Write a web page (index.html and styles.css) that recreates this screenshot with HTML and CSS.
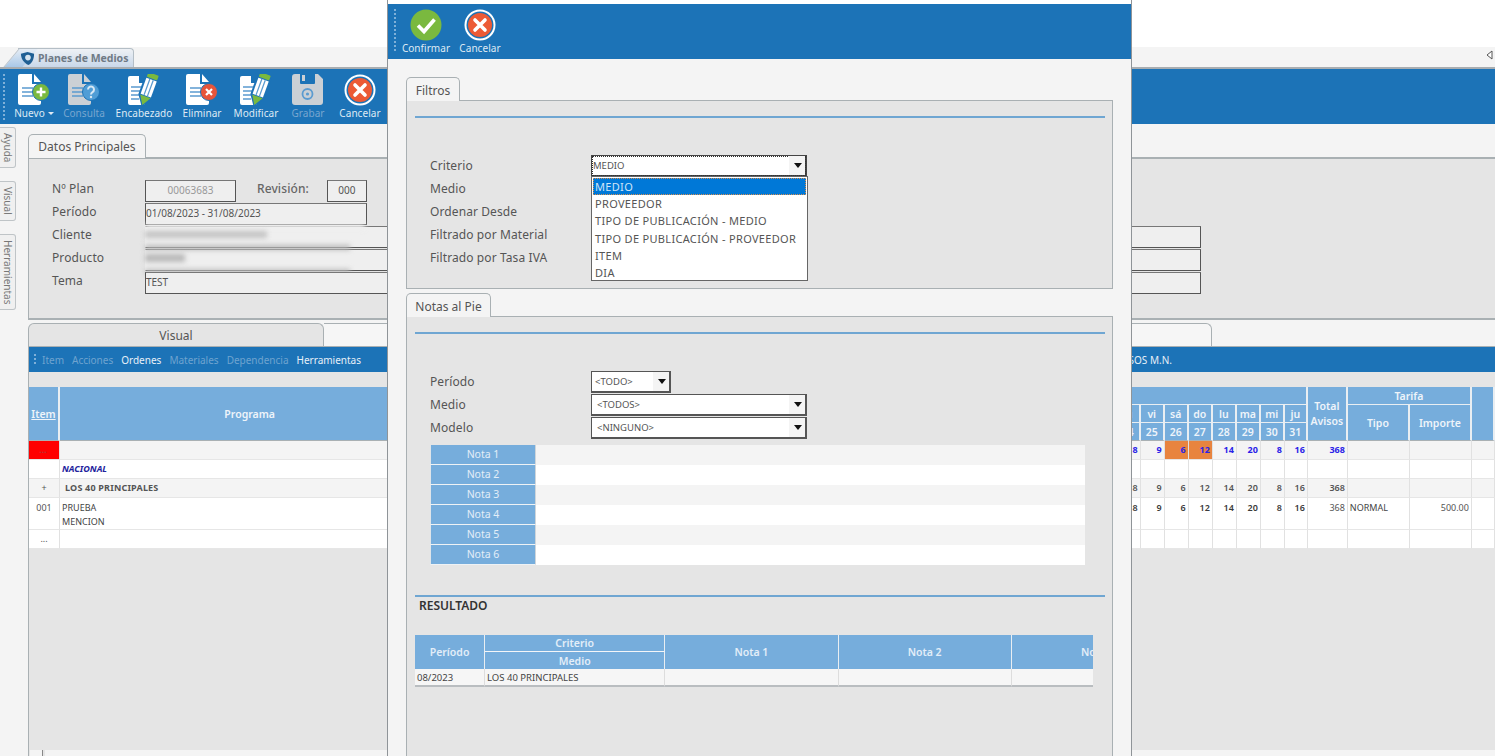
FILE: index.html
```html
<!DOCTYPE html>
<html lang="es">
<head>
<meta charset="utf-8">
<title>Planes de Medios</title>
<link rel="stylesheet" href="styles.css">
</head>
<body>
<svg class="defs" width="0" height="0" aria-hidden="true">
  <defs>
    <symbol id="doc" viewBox="0 0 32 32">
      <path d="M2 0H14V10H23V29a2 2 0 0 1-2 2H2a2 2 0 0 1-2-2V2a2 2 0 0 1 2-2z" fill="currentColor"/>
      <path d="M16 0l7 8h-7z" fill="currentColor"/>
      <path d="M4 14h11M4 18h11M4 22h11" stroke="#5b9bd0" stroke-width="1.4"/>
    </symbol>
    <symbol id="pencildoc" viewBox="0 0 32 32">
      <path d="M2 2H11V9H17V29a2 2 0 0 1-2 2H2a2 2 0 0 1-2-2V4a2 2 0 0 1 2-2z" fill="#fff"/>
      <path d="M3 13h10M3 17h10M3 21h10M3 25h8" stroke="#5b9bd0" stroke-width="1.4"/>
      <g transform="translate(20.5 14) rotate(20)">
        <path d="M-7.5 -12H7.500V9L0 20L-7.500 9z" fill="#1c73b7"/>
        <rect x="-5.500" y="-15" width="11" height="5" rx="1" fill="#7ab93f"/>
        <rect x="-5.500" y="-9" width="11" height="17" fill="#fff"/>
        <path d="M-1.800 -9V8M1.800 -9V8" stroke="#5b9bd0" stroke-width="1.300"/>
        <path d="M-5.500 9H5.500L0 18z" fill="#7ab93f"/>
      </g>
    </symbol>
    <symbol id="cancel" viewBox="0 0 32 32">
      <circle cx="16" cy="16" r="15.500" fill="#fff"/>
      <circle cx="16" cy="16" r="13.500" fill="#1c73b7"/>
      <circle cx="16" cy="16" r="12" fill="#ec5a35"/>
      <path d="M11 11l10 10M21 11l-10 10" stroke="#fff" stroke-width="3.600" stroke-linecap="round"/>
    </symbol>
  </defs>
</svg>

<div class="app">
  <div class="topgap"></div>
  <div class="tabstrip">
    <div class="apptab">
      <svg class="applogo" viewBox="0 0 16 16"><path d="M1 3L8 1l7 2c0 6-2 10-6 12C4 13 1 8 1 3z" fill="#1f5f94"/><circle cx="8.500" cy="7" r="3" fill="#d7e4ef"/></svg>
      <span>Planes de Medios</span>
    </div>
    <svg class="collapse" viewBox="0 0 7 10"><path d="M6 1v8L1 5z" fill="#fff" stroke="#555"/></svg>
  </div>

  <div class="ribbon">
    <div class="grip"></div>
    <div class="rbtn rbtn-nuevo">
      <svg class="ico"><use href="#doc" class="w"/><circle cx="23" cy="18" r="8.500" fill="#7ab93f" stroke="#1c73b7"/><path d="M23 13.500v9M18.500 18h9" stroke="#fff" stroke-width="2.400"/></svg>
      <span>Nuevo<i class="caret"></i></span>
    </div>
    <div class="rbtn off rbtn-consulta">
      <svg class="ico"><use href="#doc" class="g"/><circle cx="23" cy="18" r="8.500" fill="#4f9dd6" stroke="#1c73b7"/><path d="M20 15.500a3 3 0 1 1 4.500 2.600c-1 .6-1.500 1.200-1.500 2.400" fill="none" stroke="#d8e8f4" stroke-width="2"/><circle cx="23" cy="23" r="1.200" fill="#d8e8f4"/></svg>
      <span>Consulta</span>
    </div>
    <div class="rbtn rbtn-enc">
      <svg class="ico"><use href="#pencildoc"/></svg>
      <span>Encabezado</span>
    </div>
    <div class="rbtn rbtn-eli">
      <svg class="ico"><use href="#doc" class="w"/><circle cx="23" cy="18" r="8.500" fill="#e8553a" stroke="#1c73b7"/><path d="M20 15l6 6M26 15l-6 6" stroke="#fff" stroke-width="2.200"/></svg>
      <span>Eliminar</span>
    </div>
    <div class="rbtn rbtn-mod">
      <svg class="ico"><use href="#pencildoc"/></svg>
      <span>Modificar</span>
    </div>
    <div class="rbtn off rbtn-gra">
      <svg class="ico" viewBox="0 0 32 32"><path d="M3 0H7V10H23V0H26L31 5V28a3 3 0 0 1-3 3H3a3 3 0 0 1-3-3V3a3 3 0 0 1 3-3z" fill="#cbd0d5"/><path d="M7 0H23V10H7z" fill="#cbd0d5"/><path d="M8 0H23V9a1 1 0 0 1-1 1H9a1 1 0 0 1-1-1z" fill="#1c73b7"/><rect x="10" y="1" width="3" height="6" fill="#cbd0d5"/><circle cx="15.500" cy="20" r="5" fill="none" stroke="#5b9bd0" stroke-width="1.800"/><circle cx="15.500" cy="20" r="1.600" fill="#5b9bd0"/></svg>
      <span>Grabar</span>
    </div>
    <div class="rbtn rbtn-can">
      <svg class="ico"><use href="#cancel"/></svg>
      <span>Cancelar</span>
    </div>
  </div>

  <div class="main">
    <div class="sidebar">
      <div class="sidetab st1">Ayuda</div>
      <div class="sidetab st2">Visual</div>
      <div class="sidetab st3">Herramientas</div>
    </div>
    <div class="content">
      <div class="tab tab-datos">Datos Principales</div>
      <div class="panel panel-datos">
        <div class="frow"><label>Nº Plan</label><div class="inp w-plan c-gray">00063683</div><label class="rev">Revisión:</label><div class="inp w-rev">000</div></div>
        <div class="frow"><label>Período</label><div class="inp w-per">01/08/2023 - 31/08/2023</div></div>
        <div class="frow"><label>Cliente</label><div class="inp w-full noleft"><div class="blur b0"></div><div class="blur b1"></div></div></div>
        <div class="frow"><label>Producto</label><div class="inp w-full noleft"><div class="blur b2"></div><div class="blur b3"></div></div></div>
        <div class="frow"><label>Tema</label><div class="inp w-full">TEST</div></div>
      </div>

      <div class="tabs2">
        <div class="t2 t2-a">Visual</div>
        <div class="t2 t2-b"></div>
      </div>
      <div class="lower">
        <div class="subbar">
          <div class="grip grip-s"></div>
          <span class="dis">Item</span><span class="dis">Acciones</span><span>Ordenes</span><span class="dis">Materiales</span><span class="dis">Dependencia</span><span>Herramientas</span>
          <span class="sub-right">AVISOS M.N.</span>
        </div>
        <div class="strip"></div>
        <table class="grid">
          <colgroup>
            <col class="c-item"><col class="c-prog"><col class="c-mid">
            <col class="c-d"><col class="c-d"><col class="c-d"><col class="c-d"><col class="c-d"><col class="c-d"><col class="c-d"><col class="c-d7">
            <col class="c-tot"><col class="c-tar"><col class="c-tar"><col class="c-end">
          </colgroup>
          <thead>
            <tr class="h1">
              <th rowspan="3" class="lnk">Item</th><th rowspan="3">Programa</th><th rowspan="3"></th><th colspan="8"></th><th rowspan="3" class="tot">Total<br>Avisos</th><th colspan="2">Tarifa</th><th rowspan="3"></th>
            </tr>
            <tr class="h2"><th>ju</th><th>vi</th><th>sá</th><th>do</th><th>lu</th><th>ma</th><th>mi</th><th>ju</th><th rowspan="2">Tipo</th><th rowspan="2">Importe</th></tr>
            <tr class="h3"><th>24</th><th>25</th><th>26</th><th>27</th><th>28</th><th>29</th><th>30</th><th>31</th></tr>
          </thead>
          <tbody>
            <tr class="alt sum"><td class="red">...</td><td></td><td></td><td>8</td><td>9</td><td class="or">6</td><td class="or">12</td><td>14</td><td>20</td><td>8</td><td>16</td><td>368</td><td></td><td></td><td></td></tr>
            <tr><td></td><td class="nac">NACIONAL</td><td></td><td></td><td></td><td></td><td></td><td></td><td></td><td></td><td></td><td></td><td></td><td></td><td></td></tr>
            <tr class="alt med"><td class="ctr">+</td><td class="mp">LOS 40 PRINCIPALES</td><td></td><td>8</td><td>9</td><td>6</td><td>12</td><td>14</td><td>20</td><td>8</td><td>16</td><td>368</td><td></td><td></td><td></td></tr>
            <tr class="item"><td class="ctr">001</td><td class="prog">PRUEBA<br>MENCION</td><td></td><td>8</td><td>9</td><td>6</td><td>12</td><td>14</td><td>20</td><td>8</td><td>16</td><td class="lt">368</td><td class="left">NORMAL</td><td class="lt">500.00</td><td></td></tr>
            <tr><td class="ctr">...</td><td></td><td></td><td></td><td></td><td></td><td></td><td></td><td></td><td></td><td></td><td></td><td></td><td></td><td></td></tr>
          </tbody>
        </table>
        <div class="fill"></div>
        <div class="hscroll"><div class="hbtn"></div><div class="htrack"></div></div>
      </div>
    </div>
  </div>
</div>

<div class="modal">
  <div class="mhead">
    <div class="grip grip-m"></div>
    <div class="rbtn mb-ok">
      <svg class="ico" viewBox="0 0 32 32"><circle cx="16" cy="16" r="15.500" fill="#7ab93f"/><path d="M8 16.500l6 6 10.500-12" fill="none" stroke="#fff" stroke-width="3.600"/></svg>
      <span>Confirmar</span>
    </div>
    <div class="rbtn mb-can">
      <svg class="ico"><use href="#cancel"/></svg>
      <span>Cancelar</span>
    </div>
  </div>
  <div class="mbody">
    <div class="tab tab-fil">Filtros</div>
    <div class="panel panel-fil">
      <div class="bline"></div>
      <div class="mrow"><label>Criterio</label><div class="sel sel-w focus"><span class="val val-c">MEDIO</span><b class="arr"></b></div></div>
      <div class="mrow"><label>Medio</label></div>
      <div class="mrow"><label>Ordenar Desde</label></div>
      <div class="mrow"><label>Filtrado por Material</label></div>
      <div class="mrow"><label>Filtrado por Tasa IVA</label></div>
      <ul class="drop">
        <li class="on">MEDIO</li>
        <li>PROVEEDOR</li>
        <li>TIPO DE PUBLICACIÓN - MEDIO</li>
        <li>TIPO DE PUBLICACIÓN - PROVEEDOR</li>
        <li>ITEM</li>
        <li>DIA</li>
      </ul>
    </div>
    <div class="tab tab-not">Notas al Pie</div>
    <div class="panel panel-not">
      <div class="bline"></div>
      <div class="mrow"><label>Período</label><div class="sel sel-s"><span class="val">&lt;TODO&gt;</span><b class="arr"></b></div></div>
      <div class="mrow"><label>Medio</label><div class="sel sel-w"><span class="val">&lt;TODOS&gt;</span><b class="arr"></b></div></div>
      <div class="mrow"><label>Modelo</label><div class="sel sel-w"><span class="val">&lt;NINGUNO&gt;</span><b class="arr"></b></div></div>
      <div class="notes">
        <div class="nrow"><div class="nlab">Nota 1</div></div>
        <div class="nrow"><div class="nlab">Nota 2</div></div>
        <div class="nrow"><div class="nlab">Nota 3</div></div>
        <div class="nrow"><div class="nlab">Nota 4</div></div>
        <div class="nrow"><div class="nlab">Nota 5</div></div>
        <div class="nrow"><div class="nlab">Nota 6</div></div>
      </div>
      <div class="bline bline-r"></div>
      <div class="res-title">RESULTADO</div>
      <div class="res-wrap">
        <table class="res">
          <colgroup><col class="r-p"><col class="r-c"><col class="r-n"><col class="r-n"><col class="r-n"></colgroup>
          <thead>
            <tr><th rowspan="2">Período</th><th class="crit">Criterio</th><th rowspan="2">Nota 1</th><th rowspan="2">Nota 2</th><th rowspan="2">Nota 3</th></tr>
            <tr><th>Medio</th></tr>
          </thead>
          <tbody>
            <tr><td>08/2023</td><td>LOS 40 PRINCIPALES</td><td></td><td></td><td></td></tr>
          </tbody>
        </table>
      </div>
    </div>
  </div>
</div>
</body>
</html>
```
FILE: styles.css
```css
* { box-sizing: border-box; }
html, body { margin: 0; padding: 0; height: 756px; overflow: hidden; }
body { position: relative; background: #fff; font-family: "Noto Sans", "DejaVu Sans", sans-serif; font-size: 12px; color: #555; }
.defs { position: absolute; }
.w { color: #fff; }
.g { color: #cbd0d5; }

.app { display: flex; flex-direction: column; height: 756px; }
.topgap { height: 47px; background: #fff; flex: none; }
.tabstrip { height: 22px; flex: none; background: #f4f4f4; border-bottom: 2px solid #a8adb1; display: flex; justify-content: space-between; align-items: flex-end; }
.apptab { position: relative; margin-left: 18px; width: 116px; height: 19px; background: linear-gradient(#eef1f5, #c9d8ea); border: 1px solid #b4bec6; border-bottom: 0; border-left: 0; border-radius: 0 4px 0 0; display: flex; align-items: center; font-size: 10.500px; font-weight: 700; color: #6f7a85; }
.apptab::before { content: ""; position: absolute; left: -7px; top: 0; bottom: 0; width: 18px; background: linear-gradient(#e6edf5, #a9c8e8); border-left: 1px solid #b4bec6; transform: skewX(-40deg); }
.applogo { position: relative; width: 15px; height: 15px; margin: 0 3px 0 2px; }
.apptab span { position: relative; }
.collapse { width: 7px; height: 10px; margin: 0 2px 7px 0; }

.ribbon { height: 55px; flex: none; background: #1c73b7; display: flex; position: relative; padding-left: 15px; }
.grip { position: absolute; left: 3px; top: 5px; bottom: 4px; width: 2px; background: repeating-linear-gradient(#7fb0d8 0 2px, transparent 2px 4px); }
.rbtn { display: flex; flex-direction: column; align-items: center; color: #dfeaf4; font-size: 10px; line-height: 14px; }
.rbtn.off { color: #78a6cf; }
.rbtn span { white-space: nowrap; letter-spacing: .05px; }
.ico { width: 32px; height: 32px; margin: 5px 0 0; display: block; flex: none; }
.rbtn-nuevo { width: 38px; }
.rbtn-consulta { width: 42px; margin-left: 10px; }
.rbtn-enc { width: 58px; margin-left: 10px; }
.rbtn-eli { width: 38px; margin-left: 10px; }
.rbtn-mod { width: 46px; margin-left: 12px; }
.rbtn-gra { width: 34px; margin-left: 12px; }
.rbtn-can { width: 42px; margin-left: 14px; }
.caret { display: inline-block; margin-left: 3px; border: 3px solid transparent; border-top-color: #dfeaf4; border-bottom: 0; vertical-align: 2px; }

.main { flex: 1; display: flex; background: #f4f4f4; min-height: 0; }
.sidebar { width: 28px; flex: none; padding-top: 3px; }
.sidetab { writing-mode: vertical-rl; width: 16px; display: flex; align-items: center; justify-content: center; background: #f0f0f0; border: 1px solid #bfc4c7; border-left: 0; border-radius: 0 3px 3px 0; font-size: 10px; color: #777; }
.st1 { height: 41px; }
.st2 { height: 40px; margin-top: 13px; }
.st3 { height: 76px; margin-top: 13px; }

.content { flex: 1; min-width: 0; padding-top: 10px; display: flex; flex-direction: column; }
.tab { position: relative; z-index: 1; background: #f4f4f4; border: 1px solid #a9b0b3; border-bottom: 0; border-radius: 5px 5px 0 0; height: 24px; margin-bottom: -1px; display: flex; align-items: center; justify-content: center; color: #555; font-size: 12px; }
.tab-datos { width: 118px; flex: none; }
.panel { background: #e5e5e5; border: 1px solid #a9b0b3; }
.panel-datos { height: 163px; flex: none; padding: 21px 0 0 23px; border-width: 2px 0 2px 1px; }
.frow { display: flex; height: 23px; align-items: flex-start; }
.frow label { width: 93px; line-height: 17px; color: #555; letter-spacing: .1px; }
.inp { height: 22px; background: #efefef; border: 1px solid #555; border-top-color: #777; font-size: 10px; line-height: 18px; color: #555; position: relative; padding-left: 0; }
.noleft { border-left-color: transparent; }
.c-gray { color: #999; text-align: center; }
.w-plan { width: 91px; }
.frow .rev { width: auto; margin-left: 21px; font-weight: 500; color: #666; }
.w-rev { width: 40px; margin-left: 18px; text-align: center; }
.w-per { width: 222px; }
.w-full { width: 1056px; }
.blur { position: absolute; background: #b9b9b9; filter: blur(2.500px); left: -1px; }
.b0 { top: -3px; width: 220px; height: 6px; background: #efefef; }
.b1 { top: 4px; width: 122px; height: 7px; background: #c4c4c4; }
.b2 { top: -5px; width: 205px; height: 5px; }
.b3 { top: 4px; width: 40px; height: 8px; }
.b3::after { content: ""; position: absolute; left: 0; top: 15px; width: 205px; height: 5px; background: #bdbdbd; }

.tabs2 { display: flex; height: 24px; margin-top: 3px; flex: none; border-bottom: 1px solid #a9b0b3; }
.t2 { border: 1px solid #a9b0b3; border-bottom: 0; }
.t2-a { width: 296px; background: #e5e5e5; border-radius: 6px 6px 0 0; text-align: center; font-size: 12px; line-height: 24px; color: #555; }
.t2-b { width: 888px; background: #f6f6f6; border-left: 0; border-radius: 0 6px 0 0; }

.lower { flex: 1; min-height: 0; display: flex; flex-direction: column; border-left: 1px solid #a9b0b3; background: #e5e5e5; }
.subbar { height: 25px; flex: none; background: #1c73b7; position: relative; display: flex; align-items: center; padding-left: 13px; font-size: 10px; gap: 8px; color: #e8f0f7; }
.subbar .dis { color: #6fa3cf; }
.grip-s { left: 5px; top: 7px; bottom: 7px; }
.sub-right { margin-left: auto; margin-right: 323px; }
.strip { height: 15px; flex: none; }

.grid { width: 1466px; table-layout: fixed; border-collapse: separate; border-spacing: 0; flex: none; background: #fff; font-size: 9px; }
.c-item { width: 31px; }
.c-prog { width: 381px; }
.c-mid { width: 675px; }
.c-d { width: 24px; }
.c-d7 { width: 23px; }
.c-tot { width: 40px; }
.c-tar { width: 62px; }
.c-end { width: 23px; }
.grid th { background: #76addc; color: #eef4fa; font-weight: 600; font-size: 10.500px; padding: 0; border-right: 2px solid #e9eef2; border-bottom: 1px solid #e9eef2; }
.grid .h1 th { height: 18px; }
.grid .h2 th { height: 18px; }
.grid .h3 th { height: 18px; }
.grid thead tr th[rowspan], .grid .h3 th { border-bottom: 1px solid #a9b0b3; }
.grid .tot { line-height: 15px; }
.grid .lnk { text-decoration: underline; }
.grid td { height: 19px; padding: 0 2px 0 0; border-right: 1px solid #e1e1e1; border-bottom: 1px solid #e6e6e6; text-align: right; font-weight: 600; color: #3a3a3a; white-space: nowrap; line-height: 14px; }
.grid .alt td { background: #f4f4f4; }
.grid .sum td { color: #2a22e8; font-weight: 700; }
.grid .sum .or { background: #e8843f; }
.grid .sum .red { background: #ff0000; color: #b33; text-align: center; }
.grid .med td { color: #555; }
.grid .ctr { text-align: center; font-weight: 400; padding: 0; color: #555; }
.grid .nac { text-align: left; font-style: italic; font-weight: 700; color: #22229c; padding-left: 2px; }
.grid .mp { text-align: left; padding-left: 5px; letter-spacing: .2px; font-weight: 700; }
.grid .item td { height: 32px; vertical-align: top; padding-top: 3px; }
.grid .item .prog, .grid .item .left { text-align: left; font-weight: 400; padding-left: 2px; color: #444; }
.grid .item .lt { font-weight: 400; color: #555; }
.fill { flex: 1; }
.hscroll { height: 6px; flex: none; display: flex; gap: 2px; padding-left: 1px; }
.hbtn { width: 13px; background: #f4f4f4; border-right: 1px solid #888; }
.htrack { flex: 1; background: #f4f4f4; }

.modal { position: absolute; left: 387px; top: 0; width: 745px; height: 756px; background: #f4f4f4; border-left: 1px solid #8f9498; border-right: 1px solid #8f9498; padding-top: 4px; display: flex; flex-direction: column; overflow: hidden; }
.modal::before { content: ""; position: absolute; left: 0; right: 0; top: 0; height: 4px; background: #fff; }
.mhead { height: 55px; flex: none; background: #1c73b7; position: relative; display: flex; padding-left: 14px; }
.grip-m { left: 6px; top: 5px; bottom: 6px; }
.mb-ok { width: 48px; }
.mb-can { width: 42px; margin-left: 9px; }
.mhead .ico { margin: 5px 0 0; }
.mbody { flex: 1; min-height: 0; padding: 18px 18px 0; overflow: hidden; display: flex; flex-direction: column; }
.tab-fil { width: 54px; flex: none; padding-top: 2px; }
.panel-fil { height: 189px; flex: none; position: relative; padding: 0 0 0 23px; }
.tab-not { width: 85px; flex: none; margin-top: 4px; padding-top: 2px; }
.panel-not { flex: 1; padding: 0 0 0 23px; border-bottom: 0; min-height: 0; }
.bline { height: 2px; background: #6fa6d2; margin: 15px 7px 37px -15px; }
.bline-r { margin: 30px 7px 0 -15px; }
.mrow { display: flex; height: 23px; }
.mrow label { width: 161px; line-height: 22px; color: #555; flex: none; letter-spacing: .1px; }
.sel { height: 22px; background: #fff; border: 2px solid #555; border-width: 1px 2px 2px 1px; display: flex; align-items: center; justify-content: space-between; font-size: 9.500px; color: #555; }
.sel-w { width: 216px; }
.sel-s { width: 80px; }
.val { padding-left: 5px; }
.sel-s .val { padding-left: 3px; }
.sel .val-c { padding-left: 1px; }
.arr { width: 16px; height: 100%; background: #f4f4f4; position: relative; flex: none; }
.arr::after { content: ""; position: absolute; left: 5px; top: 7px; border: 4px solid transparent; border-top: 5px solid #111; border-bottom: 0; }
.focus { border-color: #444; outline: 1px dotted #333; outline-offset: -2px; }
.drop { position: absolute; left: 184px; top: 75px; width: 217px; height: 105px; margin: 0; padding: 1px; list-style: none; background: #fff; border: 1px solid #666; z-index: 2; font-size: 11px; letter-spacing: .32px; }
.drop li { height: 17.200px; line-height: 17px; padding-left: 2px; color: #555; white-space: nowrap; }
.drop .on { background: #0078d7; color: #cfe4f7; outline: 1px dotted #d89050; outline-offset: -1px; }
.notes { margin-top: 5px; width: 655px; }
.nrow { height: 20px; background: #f4f4f4; }
.nrow:nth-child(even) { background: #fff; }
.nlab { width: 106px; height: 20px; background: #76addc; color: #e3eef8; text-align: center; font-size: 10.500px; line-height: 19px; border-bottom: 1px solid #eef2f5; border-left: 1px solid #dfe5ea; border-right: 1px solid #cfd5da; }
.res-title { margin: 0 0 0 -11px; padding-top: 1px; font-size: 12px; font-weight: 600; color: #333; height: 38px; line-height: 16px; }
.res-wrap { width: 678px; margin-left: -15px; overflow: hidden; }
.res { width: 770px; table-layout: fixed; border-collapse: separate; border-spacing: 0; font-size: 10px; }
.r-p { width: 70px; }
.r-c { width: 180px; }
.r-n { width: 173px; }
.res th { height: 17px; padding: 0; background: #76addc; color: #e3eef8; font-weight: 600; font-size: 10.500px; border-right: 1px solid #e9eef2; }
.res .crit { border-bottom: 1px solid #f4f6f8; }
.res td { height: 18px; background: #f6f6f6; color: #444; padding: 0 0 0 2px; border-right: 1px solid #ddd; border-bottom: 2px solid #b9bdc0; font-size: 9.500px; }
```
